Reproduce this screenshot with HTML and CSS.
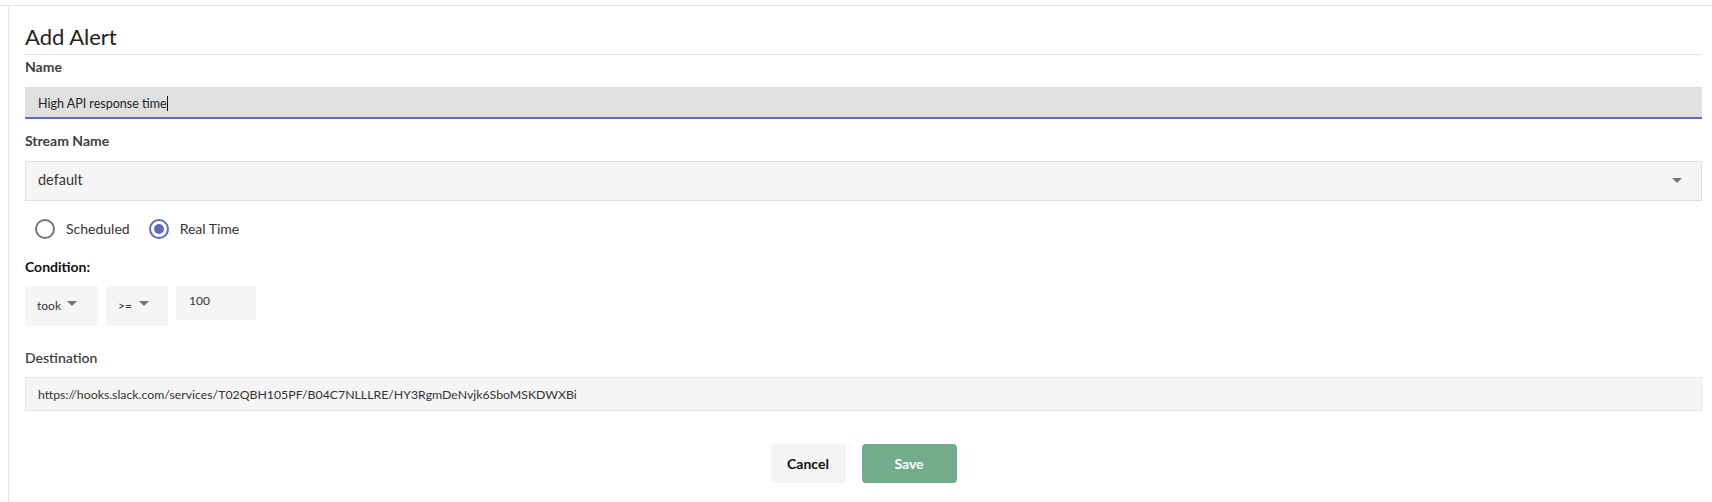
FILE: index.html
```html
<!DOCTYPE html>
<html>
<head>
<meta charset="utf-8">
<link rel="stylesheet" href="styles.css">
</head>
<body>
<div class="page">
  <div class="frame">
    <div class="panel">
      <div class="title">Add Alert</div>

      <div class="label label-first">Name</div>
      <div class="name-input">
        <span class="name-text">High API response time</span><span class="caret"></span>
      </div>

      <div class="label label-stream">Stream Name</div>
      <div class="select">
        <span class="select-text">default</span>
        <span class="arrow"></span>
      </div>

      <div class="radios">
        <label class="radio">
          <span class="circle"></span>
          <span class="radio-text">Scheduled</span>
        </label>
        <label class="radio">
          <span class="circle checked"><span class="dot"></span></span>
          <span class="radio-text">Real Time</span>
        </label>
      </div>

      <div class="cond-label">Condition:</div>
      <div class="cond-row">
        <div class="cond-box cond-field"><span class="cond-text">took</span><span class="arrow small"></span></div>
        <div class="cond-box cond-op"><span class="cond-text">&gt;=</span><span class="arrow small"></span></div>
        <div class="cond-value">100</div>
      </div>

      <div class="label label-dest">Destination</div>
      <div class="dest-input">https://hooks.slack.com/services/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</div>

      <div class="actions">
        <button class="btn btn-cancel">Cancel</button>
        <button class="btn btn-save">Save</button>
      </div>
    </div>
  </div>
</div>
</body>
</html>
```

FILE: styles.css
```css
html, body {
  margin: 0;
  padding: 0;
  background: #ffffff;
}

body {
  font-family: "Lato", "Noto Sans", "Liberation Sans", sans-serif;
  color: #333333;
  height: 502px;
  overflow: hidden;
}

.page {
  padding-top: 5px;
}

.frame {
  border-top: 1px solid #e2e2e2;
}

.panel {
  box-sizing: border-box;
  height: 496px;
  overflow: hidden;
  margin-left: 8px;
  border-left: 1px solid #e2e2e2;
  padding: 0 10px 0 16px;
}

.title {
  font-size: 22px;
  line-height: 28px;
  color: #222222;
  padding-top: 17px;
  padding-bottom: 3px;
  border-bottom: 1px solid #e4e4e4;
}

.label {
  font-size: 14px;
  line-height: 20px;
  font-weight: 700;
  color: #404040;
}

.label-first {
  margin-top: 2px;
}

.name-input {
  margin-top: 10px;
  height: 30px;
  background: #e0e0e0;
  border-bottom: 2px solid #5f6bbd;
  padding-left: 13px;
  display: flex;
  align-items: center;
  font-size: 12.5px;
  color: #222222;
}

.name-text {
  padding-top: 3px;
}

.caret {
  display: inline-block;
  width: 1px;
  height: 15px;
  background: #111111;
  margin-top: 3px;
}

.label-stream {
  margin-top: 12px;
}

.select {
  margin-top: 10px;
  height: 38px;
  background: #f5f5f5;
  border: 1px solid #e2e2e2;
  padding: 0 19px 0 12px;
  display: flex;
  align-items: center;
  justify-content: space-between;
  font-size: 14.5px;
  color: #333333;
}

.select-text {
  margin-bottom: 4px;
}

.arrow {
  width: 0;
  height: 0;
  border-left: 5px solid transparent;
  border-right: 5px solid transparent;
  border-top: 5px solid #757575;
  margin-bottom: 1px;
}

.radios {
  margin-top: 18px;
  display: flex;
  align-items: center;
  padding-left: 10px;
  gap: 19px;
}

.radio {
  display: flex;
  align-items: center;
  gap: 11px;
  font-size: 14px;
  color: #333333;
}

.circle {
  box-sizing: border-box;
  width: 20px;
  height: 20px;
  border: 2px solid #757575;
  border-radius: 50%;
  display: flex;
  align-items: center;
  justify-content: center;
}

.circle.checked {
  border-color: #5c6bc0;
}

.dot {
  width: 10px;
  height: 10px;
  border-radius: 50%;
  background: #5c6bc0;
}

.radio-text {
  line-height: 20px;
}

.cond-label {
  margin-top: 18px;
  font-size: 14px;
  line-height: 20px;
  font-weight: 700;
  color: #111111;
}

.cond-row {
  margin-top: 9px;
  display: flex;
  align-items: flex-start;
  gap: 8px;
}

.cond-box {
  height: 40px;
  background: #f5f5f5;
  display: flex;
  align-items: flex-start;
  box-sizing: border-box;
  padding-left: 12px;
  font-size: 12px;
  color: #333333;
}

.cond-field {
  width: 73px;
}

.cond-op {
  width: 62px;
}

.cond-text {
  line-height: 16px;
  margin-top: 12px;
}

.arrow.small {
  margin-left: 6px;
  margin-top: 15px;
  margin-bottom: 0;
}

.cond-op .arrow.small {
  margin-left: 7px;
}

.cond-value {
  width: 80px;
  height: 34px;
  box-sizing: border-box;
  background: #f5f5f5;
  padding-left: 13px;
  font-size: 12px;
  line-height: 30px;
  color: #333333;
}

.label-dest {
  margin-top: 22px;
  font-weight: 600;
  color: #424242;
}

.dest-input {
  margin-top: 9px;
  height: 34px;
  box-sizing: border-box;
  background: #f5f5f5;
  border: 1px solid #e6e6e6;
  padding-left: 12px;
  display: flex;
  align-items: center;
  font-size: 12.3px;
  color: #333333;
}

.actions {
  margin-top: 33px;
  display: flex;
  justify-content: center;
  gap: 16px;
}

.btn {
  height: 39px;
  border: none;
  border-radius: 4px;
  font-family: inherit;
  font-size: 14px;
  font-weight: 700;
  cursor: pointer;
  padding: 0;
}

.btn-cancel {
  width: 75px;
  background: #f4f4f4;
  color: #111111;
}

.btn-save {
  width: 95px;
  background: #72ad8b;
  color: #ffffff;
}
```
